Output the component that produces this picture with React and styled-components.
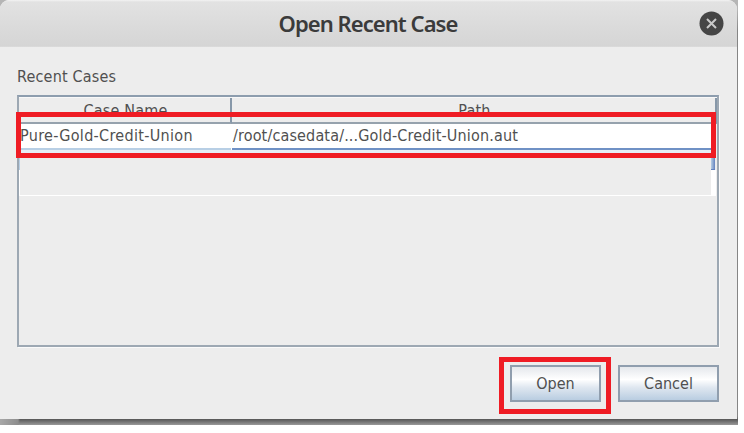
import React from "react";
import styled, { createGlobalStyle } from "styled-components";

const GlobalStyle = createGlobalStyle`
  * { box-sizing: border-box; }
  body { margin: 0; background: #fff; overflow: hidden; }
`;

const Backdrop = styled.div`
  width: 738px;
  height: 425px;
  background: linear-gradient(#b5b5b5 0 10px, #858585 30px 416px, #606060 420px, #989898 425px);
`;

const Shadow = styled.div`
  height: 6px;
  background: linear-gradient(90deg, #a8a8a8 0, #8d8d8d 18px, transparent 20px),
    linear-gradient(#555, #777 50%, #999);
`;

const Dialog = styled.main`
  display: flex;
  flex-direction: column;
  width: 737px;
  height: 419px;
  overflow: hidden;
  background: #ededed;
  border-radius: 9px 9px 0 0;
  color: #505050;
  font: 16px/20px "DejaVu Sans Condensed", "DejaVu Sans", sans-serif;
  font-stretch: condensed;
`;

const TitleBar = styled.header`
  display: grid;
  grid-template-columns: 1fr auto 1fr;
  align-items: center;
  flex: 0 0 47px;
  padding-right: 13px;
  background: linear-gradient(#f3f3f3 0, #e2e2e2 2px, #d5d5d5 46px, #dedede);
`;

const Title = styled.h1`
  grid-column: 2;
  margin: 0 0 2px 12px;
  color: #3b3b3b;
  font: 600 22px/28px "Noto Sans", sans-serif;
  white-space: nowrap;
`;

const CloseButton = styled.button`
  display: flex;
  justify-self: end;
  padding: 0;
  border: 0;
  background: none;
`;

const Body = styled.section`
  display: flex;
  flex: 1;
  flex-direction: column;
  padding: 19px 18px 18px 17px;
`;

const Text = styled.span`
  display: inline-block;
  white-space: nowrap;
  letter-spacing: ${(p) => p.$tracking || 0}px;
`;

const Label = styled.div`
  flex: 0 0 29px;
  padding-top: 1px;
`;

const Table = styled.div`
  position: relative;
  flex: 0 0 252px;
  border: 2px solid #9da8b3;
  border-top-color: #8d9dae;
  box-shadow: 1px 1px 0 #fafafa;
`;

const HeaderRow = styled.div`
  display: grid;
  grid-template-columns: 213px 1fr;
  height: 27px;
  border-top: 1px solid #f8f8f8;
`;

const HeaderCell = styled.div`
  padding: 3px 0 0 2px;
  border-right: 2px solid #8798a9;
  border-bottom: 2px solid #96a2ad;
  text-align: center;
  line-height: 19px;
`;

const DataRow = styled.div`
  display: grid;
  grid-template-columns: 212px 1fr;
  gap: 1px;
  height: 26px;
  margin-right: 2px;
  background: #fff;
`;

const DataCell = styled.div`
  padding: 2px 0 0 1px;
  border-bottom: 2px solid ${(p) => p.$line};
`;

const Selection = styled.div`
  display: flex;
  justify-content: space-between;
  height: 20px;
  margin-right: 2px;
  background: linear-gradient(#e6edf6 0 7px, #ededed 7px);
`;

const SelectionEdge = styled.i`
  width: ${(p) => p.$width}px;
  background: linear-gradient(90deg, #b8cfe5, ${(p) => p.$tone});
  border-bottom: 1px solid ${(p) => p.$tone};
`;

const EmptyRow = styled.div`
  height: 26px;
  margin-right: 1px;
  border: solid #fff;
  border-width: 0 5px 1px 1px;
`;

const Highlight = styled.div`
  position: absolute;
  inset: ${(p) => p.$inset};
  border: 5px solid #ef1c24;
  pointer-events: none;
`;

const Actions = styled.footer`
  display: flex;
  justify-content: flex-end;
  gap: 17px;
  padding-top: 18px;
`;

const ButtonSlot = styled.div`
  position: relative;
  display: flex;
`;

const Button = styled.button`
  width: ${(p) => p.$width}px;
  height: 37px;
  padding: 1px 0 0;
  border: 2px solid #909eae;
  background: linear-gradient(#e5e8ec, #fff 38%, #dfe7f0 62%, #b9cde1);
  color: #505050;
  font: inherit;
`;

export default function App() {
  return (
    <>
      <GlobalStyle />
      <Backdrop>
        <Dialog>
          <TitleBar>
            <Title><Text $tracking={-0.95}>Open Recent Case</Text></Title>
            <CloseButton aria-label="Close">
              <svg width="26" height="26" viewBox="0 0 26 26">
                <circle cx="13.5" cy="12.5" r="12" fill="#454545" />
                <path d="M9 8l9 9M18 8l-9 9" stroke="#c9c9c9" strokeWidth="2" />
              </svg>
            </CloseButton>
          </TitleBar>
          <Body>
            <Label><Text $tracking={0.18}>Recent Cases</Text></Label>
            <Table>
              <HeaderRow>
                <HeaderCell><Text $tracking={0.2}>Case Name</Text></HeaderCell>
                <HeaderCell><Text $tracking={0.2}>Path</Text></HeaderCell>
              </HeaderRow>
              <DataRow>
                <DataCell $line="#b8cfe5"><Text $tracking={0.31}>Pure-Gold-Credit-Union</Text></DataCell>
                <DataCell $line="#6f91c5"><Text $tracking={0.15}>/root/casedata/...Gold-Credit-Union.aut</Text></DataCell>
              </DataRow>
              <Selection>
                <SelectionEdge $width={1} $tone="#b8cfe5" />
                <SelectionEdge $width={4} $tone="#6382bf" />
              </Selection>
              <EmptyRow />
              <Highlight $inset="15px 1px 187px -3px" />
            </Table>
            <Actions>
              <ButtonSlot>
                <Button $width={91}><Text>Open</Text></Button>
                <Highlight $inset="-8px -10px -12px -11px" />
              </ButtonSlot>
              <Button $width={101}><Text>Cancel</Text></Button>
            </Actions>
          </Body>
        </Dialog>
        <Shadow />
      </Backdrop>
    </>
  );
}
